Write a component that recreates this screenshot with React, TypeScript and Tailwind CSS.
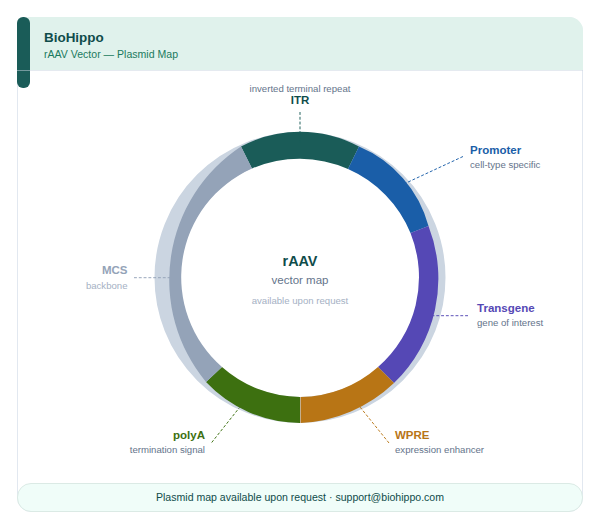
const segments = [
  { color: '#1a5c58', d: 'M241 146.5 A125 125 0 0 1 359 146.5 L348 169 A119 119 0 0 0 252 168.5 Z' },
  { color: '#1a5ea8', d: 'M359 146.5 A120 120 0 0 1 428.5 226 L410.5 233 A119 119 0 0 0 348 169 Z' },
  { color: '#5548b5', d: 'M428.5 226 A145 145 0 0 1 394 383 L378 367 A119 119 0 0 0 410.5 233 Z' },
  { color: '#b87515', d: 'M394 383 A145 145 0 0 1 300.6 423 L300.6 397 A119 119 0 0 0 378 367 Z' },
  { color: '#3d7010', d: 'M300 423 A130 130 0 0 1 206 382 L222 367 A119 119 0 0 0 300 397 Z' },
  { color: '#94a3b8', d: 'M206 382 A160 160 0 0 1 241 146.5 L252 168.5 A119 119 0 0 0 222 367 Z' },
]

const leaders = [
  { color: '#1a5c58', x1: 300, y1: 112, x2: 300, y2: 143 },
  { color: '#1a5ea8', x1: 463, y1: 156.5, x2: 406, y2: 183 },
  { color: '#5548b5', x1: 468, y1: 315.7, x2: 433, y2: 315.7 },
  { color: '#b87515', x1: 389, y1: 443, x2: 360, y2: 407 },
  { color: '#3d7010', x1: 211.7, y1: 442.5, x2: 239.5, y2: 407.5 },
  { color: '#94a3b8', x1: 134, y1: 277.7, x2: 170, y2: 277.7 },
]

const labels = [
  { x: 300, y: 92, size: 9.6, weight: 400, color: '#64748b', anchor: 'middle', text: 'inverted terminal repeat' },
  { x: 300, y: 104, size: 11.52, weight: 700, color: '#0f4c4a', anchor: 'middle', text: 'ITR' },
  { x: 470, y: 153.7, size: 11.52, weight: 700, color: '#1a5ea8', anchor: 'start', text: 'Promoter' },
  { x: 470, y: 167.5, size: 9.6, weight: 400, color: '#64748b', anchor: 'start', text: 'cell-type specific' },
  { x: 477, y: 312.3, size: 11.52, weight: 700, color: '#5548b5', anchor: 'start', text: 'Transgene' },
  { x: 477, y: 326, size: 9.6, weight: 400, color: '#64748b', anchor: 'start', text: 'gene of interest' },
  { x: 395, y: 439, size: 11.52, weight: 700, color: '#b87515', anchor: 'start', text: 'WPRE' },
  { x: 395, y: 453.2, size: 9.6, weight: 400, color: '#64748b', anchor: 'start', text: 'expression enhancer' },
  { x: 205, y: 439.2, size: 11.52, weight: 700, color: '#3d7010', anchor: 'end', text: 'polyA' },
  { x: 205, y: 453.2, size: 9.6, weight: 400, color: '#64748b', anchor: 'end', text: 'termination signal' },
  { x: 127.5, y: 274.3, size: 11.52, weight: 700, color: '#94a3b8', anchor: 'end', text: 'MCS' },
  { x: 127.5, y: 288.7, size: 9.6, weight: 400, color: '#a5b1c4', anchor: 'end', text: 'backbone' },
  { x: 300, y: 266, size: 14.4, weight: 700, color: '#0f4c4a', anchor: 'middle', text: 'rAAV' },
  { x: 300, y: 284, size: 11.52, weight: 400, color: '#64748b', anchor: 'middle', text: 'vector map' },
  { x: 300, y: 303.5, size: 9.6, weight: 400, color: '#a5b1c4', anchor: 'middle', text: 'available upon request' },
]

function PlasmidMap() {
  return (
    <svg width="566" height="412" viewBox="17 71 566 412" className="block">
      <circle cx="300" cy="277.5" r="132.5" fill="none" stroke="#cbd5e1" strokeWidth="26" />
      {segments.map((s) => (
        <path key={s.color} d={s.d} fill={s.color} />
      ))}
      {leaders.map((l) => (
        <line
          key={l.color}
          x1={l.x1}
          y1={l.y1}
          x2={l.x2}
          y2={l.y2}
          stroke={l.color}
          strokeWidth="0.96"
          strokeDasharray="2.9 1.9"
        />
      ))}
      {labels.map((t) => (
        <text
          key={t.text}
          x={t.x}
          y={t.y}
          fontSize={t.size}
          fontWeight={t.weight}
          fill={t.color}
          textAnchor={t.anchor as 'start' | 'middle' | 'end'}
        >
          {t.text}
        </text>
      ))}
    </svg>
  )
}

export default function App() {
  return (
    <div className="h-[529px] w-[600px] bg-white p-[17px] font-['Liberation_Sans',Arial,sans-serif]">
      <div className="relative flex h-[495px] flex-col rounded-[14px] border border-[#e2e8f0]">
        <header className="-mx-px -mt-px flex h-[53px] flex-col justify-center rounded-t-[14px] bg-[#e0f2ec] pl-[27px] pt-[4px]">
          <div className="text-[13.44px] font-bold leading-[18px] text-[#0f4c4a]">BioHippo</div>
          <div className="text-[10.56px] leading-[15px] text-[#1a7a5e]">rAAV Vector — Plasmid Map</div>
        </header>
        {/* 헤더 왼쪽 막대 */}
        <div className="absolute -left-px -top-px h-[71px] w-[13px] rounded-[6px] bg-[#1a5c58]" />
        {/* 막대 위로 지나가는 구분선 */}
        <div className="relative -mx-px h-px shrink-0 bg-[#cbd5e1]/50" />
        <main className="-mx-px flex-1">
          <PlasmidMap />
        </main>
        <footer className="-mx-px -mb-px flex h-[29px] shrink-0 items-center justify-center rounded-[14px] border border-[#dbeae5] bg-[#f0fdf9] text-[10.56px] text-[#0f4c4a]">
          Plasmid map available upon request · support@biohippo.com
        </footer>
      </div>
    </div>
  )
}
